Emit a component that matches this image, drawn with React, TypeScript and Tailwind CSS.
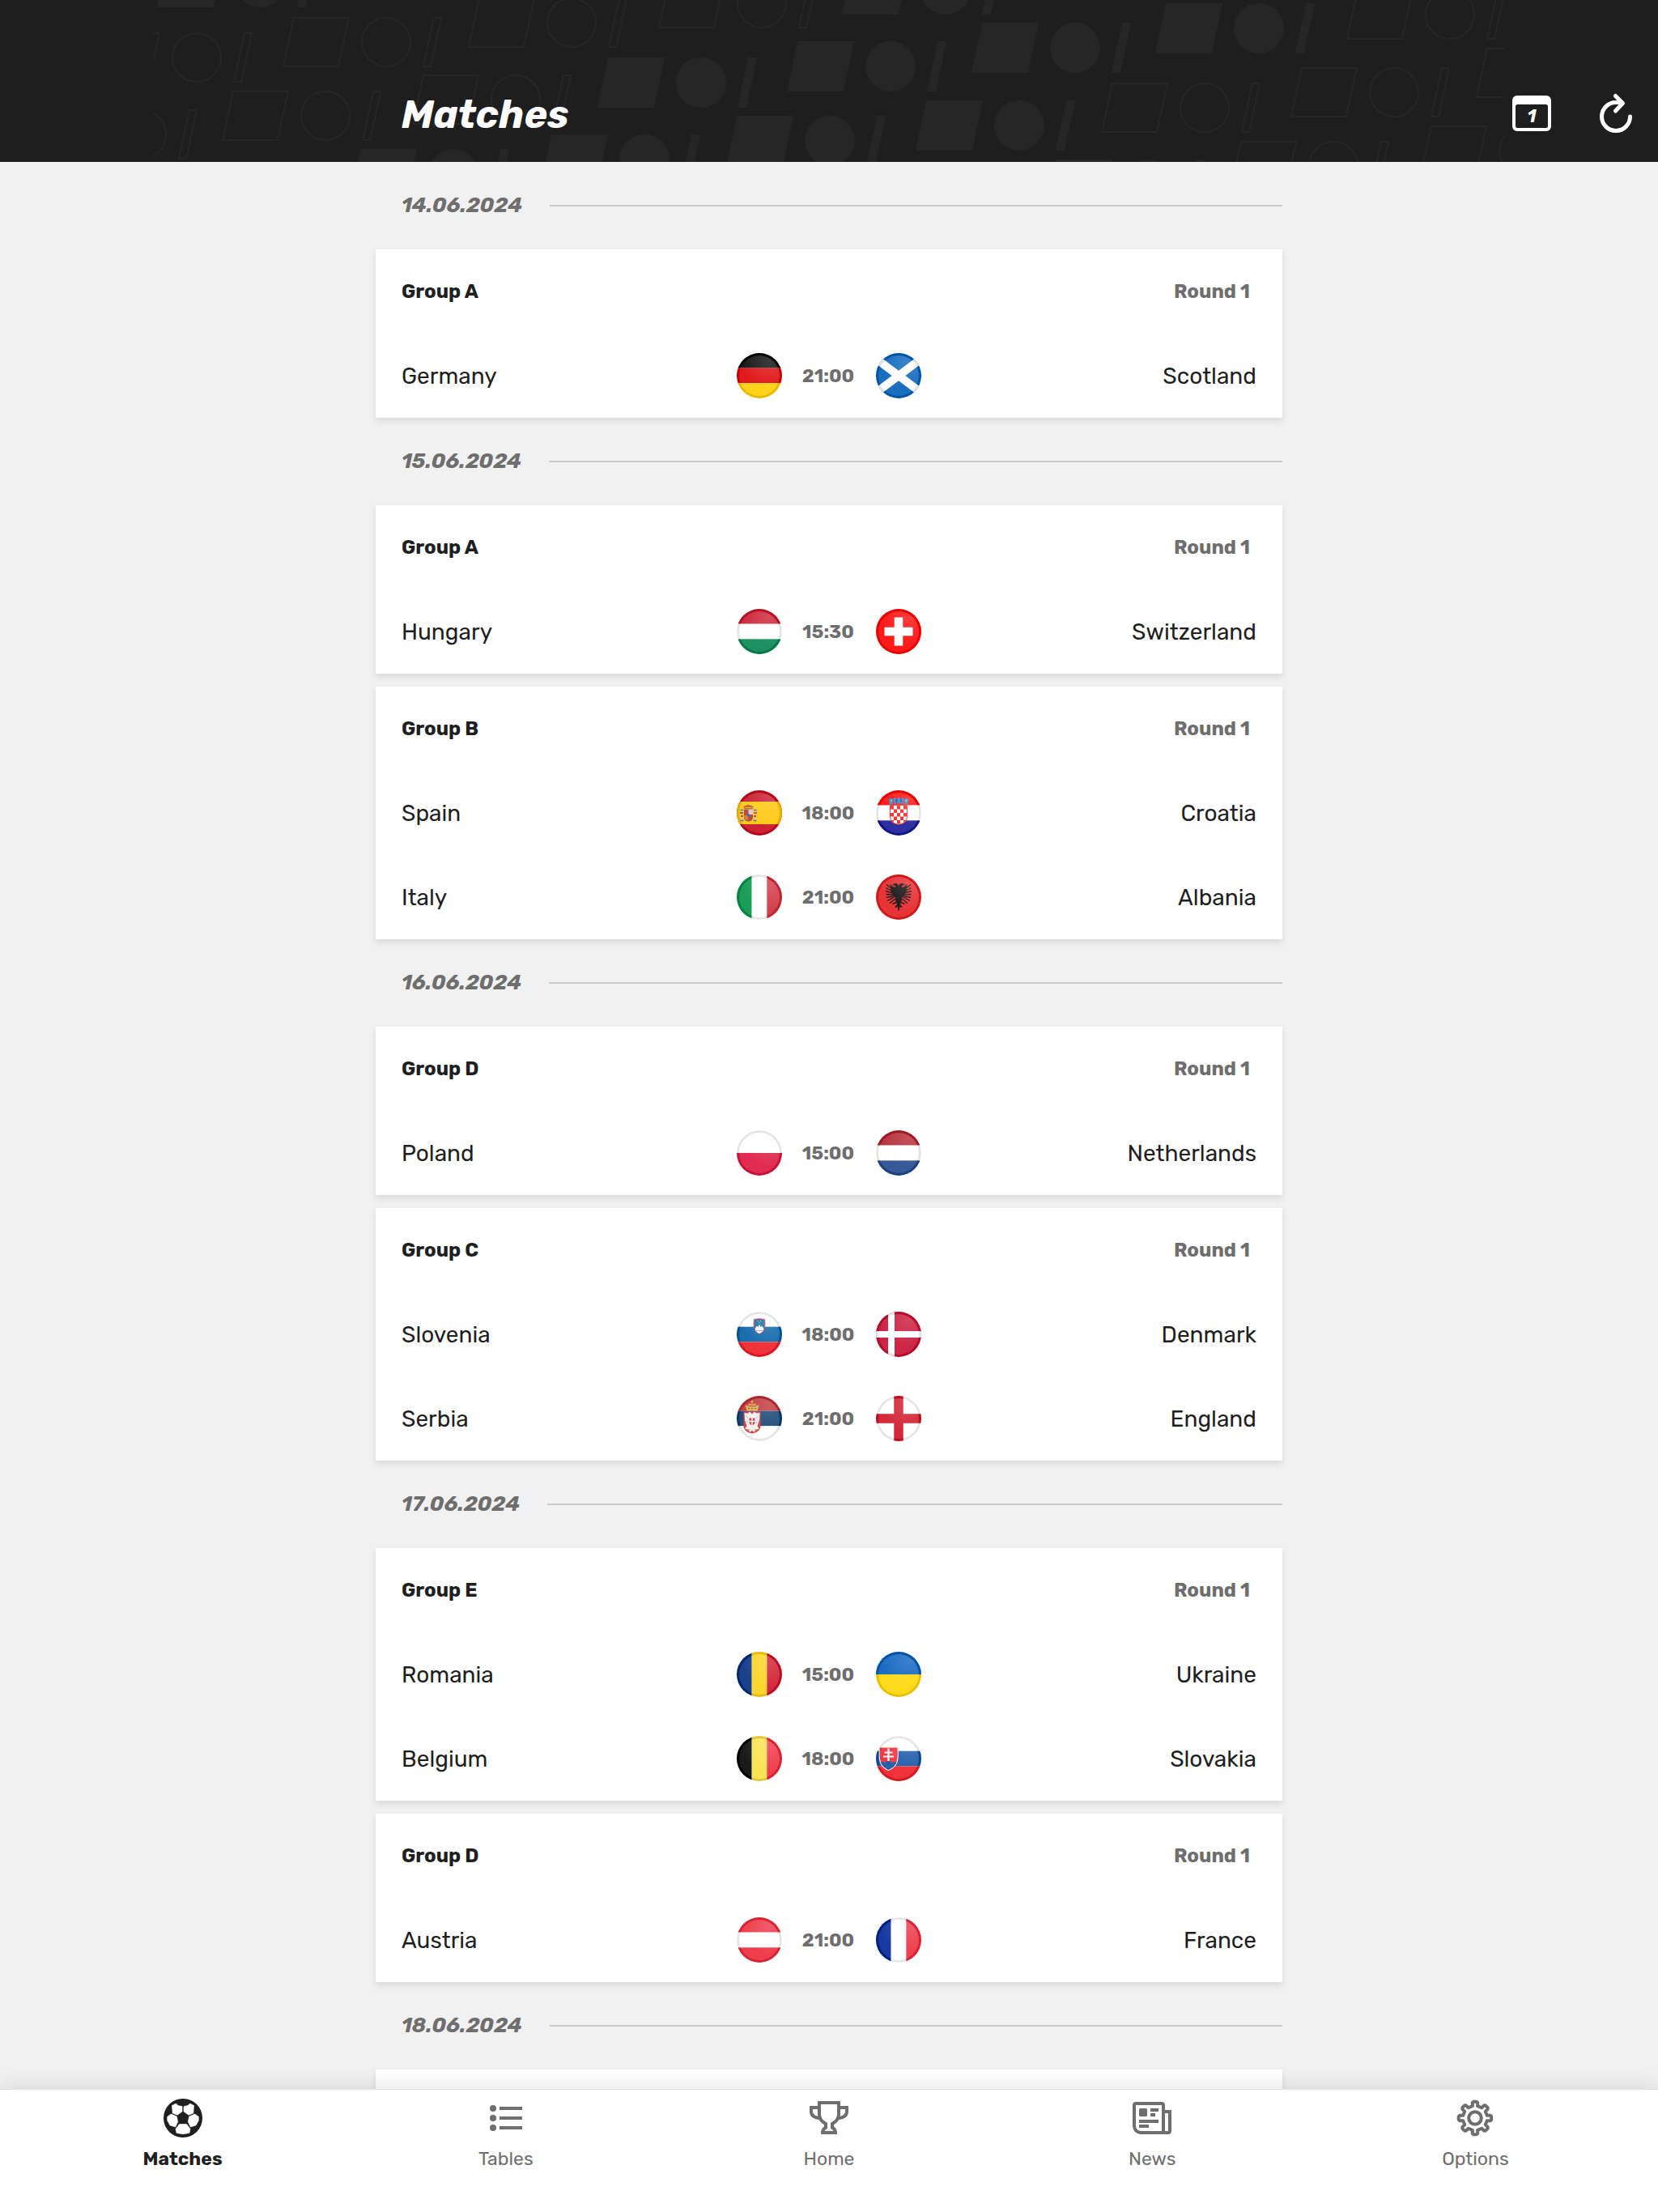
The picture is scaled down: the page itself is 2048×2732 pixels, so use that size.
import clsx from "clsx";
import React from "react";

type Match = { home: string; away: string; time: string };
type Group = { name: string; round: string; matches: Match[] };
type Day = { date: string; groups: Group[] };

const days: Day[] = [
  {
    date: "14.06.2024",
    groups: [
      { name: "Group A", round: "Round 1", matches: [{ home: "Germany", away: "Scotland", time: "21:00" }] },
    ],
  },
  {
    date: "15.06.2024",
    groups: [
      { name: "Group A", round: "Round 1", matches: [{ home: "Hungary", away: "Switzerland", time: "15:30" }] },
      {
        name: "Group B",
        round: "Round 1",
        matches: [
          { home: "Spain", away: "Croatia", time: "18:00" },
          { home: "Italy", away: "Albania", time: "21:00" },
        ],
      },
    ],
  },
  {
    date: "16.06.2024",
    groups: [
      { name: "Group D", round: "Round 1", matches: [{ home: "Poland", away: "Netherlands", time: "15:00" }] },
      {
        name: "Group C",
        round: "Round 1",
        matches: [
          { home: "Slovenia", away: "Denmark", time: "18:00" },
          { home: "Serbia", away: "England", time: "21:00" },
        ],
      },
    ],
  },
  {
    date: "17.06.2024",
    groups: [
      {
        name: "Group E",
        round: "Round 1",
        matches: [
          { home: "Romania", away: "Ukraine", time: "15:00" },
          { home: "Belgium", away: "Slovakia", time: "18:00" },
        ],
      },
      { name: "Group D", round: "Round 1", matches: [{ home: "Austria", away: "France", time: "21:00" }] },
    ],
  },
  // not loaded yet, shows an empty card
  { date: "18.06.2024", groups: [] },
];

/* ---------- flags ---------- */

const Rows = ({ colors }: { colors: string[] }) => (
  <>
    {colors.map((c, i) => (
      <rect key={i} y={(56 / colors.length) * i} width="56" height={56 / colors.length} fill={c} />
    ))}
  </>
);

const Cols = ({ colors }: { colors: string[] }) => (
  <>
    {colors.map((c, i) => (
      <rect key={i} x={(56 / colors.length) * i} width={56 / colors.length} height="56" fill={c} />
    ))}
  </>
);

const checks = Array.from({ length: 25 }, (_, i) => i).filter((i) => i % 2 === 0);

const flags: Record<string, React.ReactNode> = {
  Germany: <Rows colors={["#000000", "#dd0000", "#ffce00"]} />,
  Scotland: (
    <>
      <rect width="56" height="56" fill="#005eb8" />
      <path d="M-4 4 60 52M60 4 -4 52" stroke="#fff" strokeWidth="10" />
    </>
  ),
  Hungary: <Rows colors={["#c8142a", "#ffffff", "#048450"]} />,
  Switzerland: (
    <>
      <rect width="56" height="56" fill="#ff0000" />
      <path d="M28 10.500V45.500M10.500 28H45.500" stroke="#fff" strokeWidth="10.600" />
    </>
  ),
  Spain: (
    <>
      <rect width="56" height="56" fill="#c60b1e" />
      <rect y="14" width="56" height="28" fill="#ffc400" />
      <path d="M6.500 23V38M22.500 23V38" stroke="#c8b8a8" strokeWidth="2" />
      <path d="M4 28h4M21 28h4M5 32h3M21 32h3" stroke="#ad1519" strokeWidth="1.500" />
      <path d="M4.500 37.500h4M20.500 37.500h4M4.500 24.500h3.500M21 24.500h3.500" stroke="#3f6aa8" strokeWidth="1.500" />
      <path d="M9 24h11v9c0 4-2.500 5.500-5.500 5.500S9 37 9 33z" fill="#ad3a2a" />
      <path d="M14.500 24H20v6h-5.500z" fill="#d9c2cf" />
      <path d="M9 31h5v6c-3 0-5-1.500-5-4z" fill="#c8702a" />
      <circle cx="14.500" cy="31" r="1.800" fill="#2a5aa0" />
      <path d="M9 23.500 8.500 20l2.500-1 3.500-1 3.500 1 2.500 1-.5 3.500z" fill="#b5522a" />
      <path d="M9.500 21.500h10" stroke="#e0a82a" strokeWidth="1" />
    </>
  ),
  Croatia: (
    <>
      <Rows colors={["#ff0000", "#ffffff", "#171796"]} />
      <path d="M17 18V32c0 6 4.500 10.500 11 10.500S39 38 39 32V18z" fill="#ff2a2a" />
      <path d="M18 19V32c0 5.500 4 9.500 10 9.500S38 37.500 38 32V19z" fill="#fff" />
      <clipPath id="hr-shield">
        <path d="M18 19V32c0 5.500 4 9.500 10 9.500S38 37.500 38 32V19z" />
      </clipPath>
      <g clipPath="url(#hr-shield)">
        {checks.map((i) => (
          <rect key={i} x={18 + (i % 5) * 4} y={19 + Math.floor(i / 5) * 4.5} width="4" height="4.500" fill="#ff1a1a" />
        ))}
      </g>
      <path d="M17 18 15.500 11l3-1.500 2.500 2 2-2.500 2.500 2 2.500-2.500 2.500 2.500 2.500-2 2 2.500 2.500-2 3 1.500-1.500 7Q28 14.500 17 18z" fill="#2483c8" />
      <path d="M21.500 12.500v4M34.500 12.500v4" stroke="#d02030" strokeWidth="2" />
      <path d="M25.500 11v4.500M31 11v4.500" stroke="#1c3f95" strokeWidth="2" />
      <path d="M18.500 13h1.500M36.500 13h1.500" stroke="#e8d060" strokeWidth="1.500" />
    </>
  ),
  Italy: <Cols colors={["#009246", "#ffffff", "#ce2b37"]} />,
  Albania: (
    <>
      <rect width="56" height="56" fill="#e41e20" />
      <g fill="#000" stroke="#000">
        <path
          d="M28 16 27 12.500 24.500 11 20.500 12.500 24 13.500 24.500 16.500 21 15.500 18 12.500 19 22 21.500 27 24.500 28.500 24 31.500 25.500 34 26.500 38 28 45 29.500 38 30.500 34 32 31.500 31.500 28.500 34.500 27 37 22 38 12.500 35 15.500 31.500 16.500 32 13.500 35.500 12.500 31.500 11 29 12.500z"
          strokeWidth=".6"
        />
        <path
          d="M19 17 13 12.500M19 20 12.500 16.500M19 22.500 12 20.500M20 25 12.500 24.500M21 27 13 28.500M22.500 28 14 32.500M24 30 17 35.500M37 17 43 12.500M37 20 43.500 16.500M37 22.500 44 20.500M36 25 43.500 24.500M35 27 43 28.500M33.500 28 42 32.500M32 30 39 35.500"
          strokeWidth="1.400"
        />
        <path d="M26 34 20.500 36.500M30 34 35.500 36.500M26.500 38 24 40.500M29.500 38 32 40.500" strokeWidth="1.800" />
      </g>
    </>
  ),
  Poland: <Rows colors={["#ffffff", "#dc143c"]} />,
  Netherlands: <Rows colors={["#ae1c28", "#ffffff", "#21468b"]} />,
  Slovenia: (
    <>
      <Rows colors={["#ffffff", "#005da4", "#ed1c24"]} />
      <path d="M21.500 9.500Q28 8 34.500 9.500C35.500 18 35 25 28 27.500 21 25 20.500 18 21.500 9.500z" fill="#0f62a5" stroke="#c83248" strokeWidth="1" />
      <path d="M22.500 21 25 17.500l1.500 1.500 1.500-3.500 1.500 3.500 1.500-1.500 2.500 3.500C33 24 31 26 28 27c-3-1-5-3-5.500-6z" fill="#fff" />
      <path d="M24 23.500h8" stroke="#4f8fc5" strokeWidth=".8" />
      <path d="M26 11.500h1M29 11.500h1M27.500 13.500h1" stroke="#e0c840" strokeWidth="1" />
    </>
  ),
  Denmark: (
    <>
      <rect width="56" height="56" fill="#c60c30" />
      <path d="M19 0V56M0 28H56" stroke="#fff" strokeWidth="8" />
    </>
  ),
  Serbia: (
    <>
      <Rows colors={["#bd2a32", "#0c3a6c", "#ffffff"]} />
      <path d="M8.500 19.500h21V37c0 5-4 8.500-10.500 9.500C12.500 45.500 8.500 42 8.500 37z" fill="#c8323a" />
      <path d="M19 22.500 16 19.500l-2 2-4.500-.500.500 9 2.500 7-2.500 4 4 .500 2.500 3.500 2.500-2.500 2.500 2.500 2.500-3.500 4-.500-2.500-4 2.500-7 .500-9-4.500.500-2-2z" fill="#f2eeee" />
      <path d="M15.500 27.500h7v6.500l-3.500 3-3.500-3z" fill="#c8323a" />
      <path d="M19 27V37.500M15.500 31.500h7" stroke="#fff" strokeWidth="1.300" />
      <path d="M11.500 24l2.500 4M26.500 24l-2.500 4M12.500 31l1.500 3M25.500 31l-1.500 3" stroke="#b8a8a8" strokeWidth=".8" />
      <path d="M13.500 42h2M22.500 42h2" stroke="#d8a040" strokeWidth="2" />
      <path d="M12.500 18.500 10.500 11.500l3 .5 2-2.500 3.500 1 3.500-1 2 2.500 3-.5-2 7z" fill="#d8a83a" />
      <path d="M14 15.500h2M18 15.500h2M22 15.500h2M14 12.500h10" stroke="#a82a30" strokeWidth="1.200" />
      <path d="M19 5.500v4M17.500 7h3" stroke="#d8b860" strokeWidth="1.200" />
    </>
  ),
  England: (
    <>
      <rect width="56" height="56" fill="#fff" />
      <path d="M28 0V56M0 28H56" stroke="#ce1124" strokeWidth="11.500" />
    </>
  ),
  Romania: <Cols colors={["#002b7f", "#fcd116", "#ce1126"]} />,
  Ukraine: <Rows colors={["#005bbb", "#ffd500"]} />,
  Belgium: <Cols colors={["#000000", "#fae042", "#ed2939"]} />,
  Slovakia: (
    <>
      <Rows colors={["#ffffff", "#0b4ea2", "#ee1c25"]} />
      <path d="M4 14H27.500C28.500 30 27.500 38 15.500 43 3.500 38 3 30 4 14z" fill="#fff" />
      <clipPath id="sk-shield">
        <path d="M5 14.500H26.500C27.500 29.500 26.500 37 15.500 42 4.500 37 4 29.500 5 14.500z" />
      </clipPath>
      <g clipPath="url(#sk-shield)">
        <rect width="30" height="44" fill="#ee2530" />
        <circle cx="8" cy="36" r="4" fill="#0b4ea2" />
        <circle cx="15.500" cy="36" r="5" fill="#0b4ea2" />
        <circle cx="23" cy="36" r="4" fill="#0b4ea2" />
        <rect x="4" y="37" width="24" height="8" fill="#0b4ea2" />
        <path d="M15.500 15.500V31M10.500 20.500h10M9 25.500h13" stroke="#fff" strokeWidth="2.200" />
      </g>
    </>
  ),
  Austria: <Rows colors={["#ed2939", "#ffffff", "#ed2939"]} />,
  France: <Cols colors={["#002395", "#ffffff", "#ed2939"]} />,
};

const Flag = ({ team }: { team: string }) => (
  <span className="relative block size-14 overflow-hidden rounded-full">
    <svg viewBox="0 0 56 56" className="size-14" aria-hidden="true">
      {flags[team]}
    </svg>
    <span className="absolute inset-0 rounded-full border-[3px] border-black/10" />
    <span className="absolute inset-[3px] rounded-full bg-[radial-gradient(circle_at_75%_15%,rgba(255,255,255,0.24),rgba(255,255,255,0.1)_60%)]" />
  </span>
);

/* ---------- header ---------- */

// circle centre of every rectangle / circle / slash set
const outlined = [
  [243, 71], [477, 52], [706, 28], [941, 4], [402, 143], [637, 123], [175, 166],
  [1791, 18], [1488, 133], [1722, 114], [1951, 90], [1647, 205], [1882, 186],
];
const filled = [
  [322, -22], [866, 102], [560, 215], [796, 197], [1100, 82], [1025, 174],
  [1168, -13], [1328, 59], [1555, 35], [1259, 155], [1419, 228],
];

const Shapes = ({ x, y }: { x: number; y: number }) => (
  <g transform={`translate(${x} ${y})`}>
    <path d="M-114-30H-46L-59 30H-127z" />
    <circle r="30" />
    <path d="M59-30H68L55 30H46z" />
  </g>
);

const Pattern = () => (
  <svg
    viewBox="190 0 1668 200"
    preserveAspectRatio="xMidYMin slice"
    className="absolute inset-y-0 left-1/2 h-full w-[1668px] -translate-x-1/2"
    aria-hidden="true"
  >
    <g fill="none" stroke="#262626" strokeWidth="2">
      {outlined.map(([x, y]) => (
        <Shapes key={`${x}-${y}`} x={x} y={y} />
      ))}
    </g>
    <g fill="#262626" stroke="#262626" strokeWidth="2">
      {filled.map(([x, y]) => (
        <Shapes key={`${x}-${y}`} x={x} y={y} />
      ))}
    </g>
  </svg>
);

const Header = () => (
  <header className="relative grid h-[200px] shrink-0 grid-cols-[1fr_minmax(0,1120px)_1fr] items-end overflow-hidden bg-[#1e1e1e] pb-8 text-white">
    <Pattern />
    <h1 className="relative col-start-2 px-8 text-5xl leading-[52px] font-bold italic">Matches</h1>
    <div className="relative flex justify-end gap-12 pr-6">
      <button type="button" aria-label="Today" className="cursor-pointer">
        <svg viewBox="0 0 56 56" className="size-14" fill="none">
          <path
            fillRule="evenodd"
            d="M10 6H46a6 6 0 0 1 6 6V44a6 6 0 0 1-6 6H10a6 6 0 0 1-6-6V12a6 6 0 0 1 6-6zM10.500 17a2.500 2.500 0 0 0-2.500 2.500V43.500a2.500 2.500 0 0 0 2.500 2.500H45.500a2.500 2.500 0 0 0 2.500-2.500V19.500a2.500 2.500 0 0 0-2.500-2.500z"
            fill="currentColor"
          />
          <text x="28" y="39" textAnchor="middle" fill="currentColor" className="text-[22px] font-bold italic">
            1
          </text>
        </svg>
      </button>
      <button type="button" aria-label="Refresh" className="cursor-pointer">
        <svg viewBox="0 0 56 56" className="size-14" fill="none" stroke="currentColor" strokeWidth="5" strokeLinecap="round" strokeLinejoin="round">
          <path d="M45.500 32A17.500 17.500 0 1 1 28 14.500Q32 14.500 35.500 15.500" />
          <path d="M27.500 6.500 36.500 15.500 27.500 25" />
        </svg>
      </button>
    </div>
  </header>
);

/* ---------- match list ---------- */

const MatchRow = ({ home, away, time }: Match) => (
  <li className="grid h-[104px] grid-cols-[1fr_auto_1fr] items-center px-8 text-[28px] leading-9">
    <span className="pt-0.5">{home}</span>
    <span className="flex items-center">
      <Flag team={home} />
      <time className="w-[116px] pr-0.5 text-center text-[23px] font-bold text-[#6e6e6e]">{time}</time>
      <Flag team={away} />
    </span>
    <span className="pt-0.5 text-right">{away}</span>
  </li>
);

const GroupCard = ({ group }: { group: Group }) => (
  <section className="bg-white shadow-[0_4px_8px_rgba(0,0,0,0.1)]">
    <div className="flex h-[104px] items-center justify-between pr-10 pl-8 text-2xl font-bold">
      <h3>{group.name}</h3>
      <p className="text-[#6e6e6e]">{group.round}</p>
    </div>
    <ul>
      {group.matches.map((m) => (
        <MatchRow key={m.home} {...m} />
      ))}
    </ul>
  </section>
);

const DaySection = ({ day }: { day: Day }) => (
  <section>
    <div className="flex h-[108px] items-center gap-[34px] pl-8">
      <h2 className="text-[26px] leading-8 font-bold text-[#6e6e6e] italic">{day.date}</h2>
      <hr className="flex-1 border-t-2 border-[#cacaca]" />
    </div>
    <div className="flex flex-col gap-4">
      {day.groups.map((g) => (
        <GroupCard key={g.name} group={g} />
      ))}
      {day.groups.length === 0 && <div className="h-52 bg-white shadow-[0_4px_8px_rgba(0,0,0,0.1)]" />}
    </div>
  </section>
);

/* ---------- tab bar ---------- */

const BallIcon = () => (
  <>
    <circle cx="28" cy="28" r="24" fill="currentColor" />
    <g fill="#fff" stroke="#fff" strokeWidth=".6" strokeLinejoin="round">
      <path d="M14.500 12.500 19.500 10 22 12.600 27 13.600V20L21 24.200 15.200 22z" />
      <path d="M41.500 12.500 36.500 10 34 12.600 29 13.600V20L35 24.200 40.800 22z" />
      <path d="M8.700 26.300 13.300 23 20.300 26 21.700 32.500 18.700 39 12 37 8.700 31z" />
      <path d="M47.300 26.300 42.700 23 35.700 26 34.300 32.500 37.300 39 44 37 47.300 31z" />
      <path d="M23.500 35.500H32.500L37 41.300 36 46.300Q28 49 20 46.300L19 41.300z" />
    </g>
  </>
);

const ListIcon = () => (
  <g fill="currentColor">
    {[16, 28, 40].map((y) => (
      <g key={y}>
        <circle cx="12" cy={y} r="4" />
        <rect x="20" y={y - 2} width="28" height="4" />
      </g>
    ))}
  </g>
);

const TrophyIcon = () => (
  <g fill="none" stroke="currentColor" strokeWidth="4">
    <path d="M16 9H40V23C40 29 36 33 32 35V39.500C34.500 41 36 43 36 46H20C20 43 21.500 41 24 39.500V35C20 33 16 29 16 23z" />
    <path d="M16 15H6V20C6 25 10 27.500 17 28M40 15H50V20C50 25 46 27.500 39 28" />
  </g>
);

const NewsIcon = () => (
  <>
    <path d="M42 46V12a2 2 0 0 0-2-2H8a2 2 0 0 0-2 2V37c0 5.500 3.500 9 9 9H48a2 2 0 0 0 2-2V20H42" fill="none" stroke="currentColor" strokeWidth="4" />
    <rect x="12" y="16" width="10" height="10" rx="1.500" fill="currentColor" />
    <path d="M26 16H36v4H26zM26 22h6v4H26zM12 30H36v4H12zM12 36H24v4H12z" fill="currentColor" />
  </>
);

const toothAngles = [0, 45, 90, 135, 180, 225, 270, 315];
const tooth = [[-3.2, -14.8], [-3.2, -19], [-2, -20.2], [2, -20.2], [3.2, -19], [3.2, -14.8]];
const gear = toothAngles
  .flatMap((deg) => {
    const a = (deg * Math.PI) / 180;
    return tooth.map(([x, y]) => [
      (28 + x * Math.cos(a) - y * Math.sin(a)).toFixed(2),
      (28 + x * Math.sin(a) + y * Math.cos(a)).toFixed(2),
    ]);
  })
  .join(" ");

const GearIcon = () => (
  <g fill="none" stroke="currentColor" strokeWidth="4" strokeLinejoin="round">
    <polygon points={gear} />
    <circle cx="28" cy="28" r="7.800" />
  </g>
);

const tabs = [
  { label: "Matches", icon: <BallIcon /> },
  { label: "Tables", icon: <ListIcon /> },
  { label: "Home", icon: <TrophyIcon /> },
  { label: "News", icon: <NewsIcon /> },
  { label: "Options", icon: <GearIcon /> },
];

const TabBar = () => (
  <nav className="relative flex h-[152px] shrink-0 border-t border-[#dcdcdc] bg-white px-[26px] shadow-[0_-4px_24px_rgba(0,0,0,0.1)]">
    {tabs.map(({ label, icon }, i) => (
      <a
        key={label}
        href="#"
        className={clsx(
          "flex flex-1 flex-col items-center gap-1.5 pt-[7px] text-[23px] leading-8",
          i === 0 ? "font-bold" : "text-[#6e6e6e]"
        )}
      >
        <svg viewBox="0 0 56 56" className="size-14" aria-hidden="true">
          {icon}
        </svg>
        {label}
      </a>
    ))}
  </nav>
);

const App = () => (
  <div className="flex h-screen flex-col overflow-hidden bg-[#f1f1f1] font-['Rubik','Inter',sans-serif] text-[#1f1f1f]">
    <Header />
    <main className="min-h-0 flex-1 overflow-y-auto [scrollbar-width:none]">
      <div className="mx-auto max-w-[1120px]">
        {days.map((day) => (
          <DaySection key={day.date} day={day} />
        ))}
      </div>
    </main>
    <TabBar />
  </div>
);

export default App;
